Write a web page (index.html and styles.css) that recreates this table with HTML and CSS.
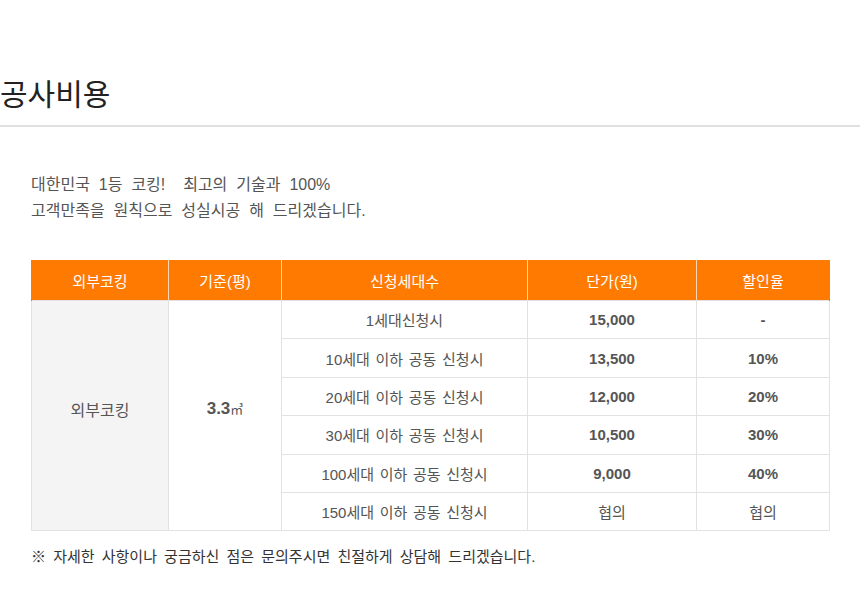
FILE: index.html
```html
<!DOCTYPE html>
<html lang="ko">
<head>
<meta charset="utf-8">
<title>공사비용</title>
<link rel="stylesheet" href="styles.css">
</head>
<body>
<div class="page">
  <h2 class="title">공사비용</h2>
  <div class="content">
    <p class="intro">대한민국 1등 코킹!&nbsp; 최고의 기술과 100%<br>고객만족을 원칙으로 성실시공 해 드리겠습니다.</p>
    <table class="price">
      <colgroup>
        <col class="c1"><col class="c2"><col class="c3"><col class="c4"><col class="c5">
      </colgroup>
      <thead>
        <tr><th>외부코킹</th><th>기준(평)</th><th>신청세대수</th><th>단가(원)</th><th>할인율</th></tr>
      </thead>
      <tbody>
        <tr>
          <td rowspan="6" class="cat">외부코킹</td>
          <td rowspan="6" class="area">3.3<span class="unit">㎥</span></td>
          <td>1세대신청시</td><td class="num">15,000</td><td class="num">-</td>
        </tr>
        <tr><td>10세대 이하 공동 신청시</td><td class="num">13,500</td><td class="num">10%</td></tr>
        <tr><td>20세대 이하 공동 신청시</td><td class="num">12,000</td><td class="num">20%</td></tr>
        <tr><td>30세대 이하 공동 신청시</td><td class="num">10,500</td><td class="num">30%</td></tr>
        <tr><td>100세대 이하 공동 신청시</td><td class="num">9,000</td><td class="num">40%</td></tr>
        <tr><td>150세대 이하 공동 신청시</td><td>협의</td><td>협의</td></tr>
      </tbody>
    </table>
    <p class="note">※ 자세한 사항이나 궁금하신 점은 문의주시면 친절하게 상담해 드리겠습니다.</p>
  </div>
</div>
</body>
</html>
```

FILE: styles.css
```css
html, body {
  margin: 0;
  padding: 0;
  background: #fff;
}
body {
  font-family: "Liberation Sans", "Noto Sans CJK KR", sans-serif;
  color: #555;
}
.page {
  width: 860px;
  padding-top: 71px;
}
.title {
  margin: 0;
  padding: 0 0 12px 0;
  font-size: 30px;
  line-height: 42px;
  font-weight: normal;
  color: #222;
  font-family: "Noto Sans CJK KR", sans-serif;
  border-bottom: 2px solid #e0e0e0;
}
.content {
  padding: 0 31px 0 31px;
}
.intro {
  margin: 45px 0 0 0;
  font-size: 16px;
  line-height: 26px;
  color: #555;
  word-spacing: 4.5px;
}
.price {
  margin-top: 36px;
  width: 798px;
  border-collapse: collapse;
  table-layout: fixed;
  font-size: 15px;
  word-spacing: 1.5px;
}
.c1 { width: 137px; }
.c2 { width: 113px; }
.c3 { width: 246px; }
.c4 { width: 169px; }
.c5 { width: 133px; }
.price th {
  background: #ff7a00;
  color: #fff;
  font-weight: normal;
  height: 40px;
  padding: 0;
  border-left: 1px solid #ffd9b3;
  border-right: 1px solid #ffd9b3;
}
.price th:first-child { border-left-color: #ff7a00; }
.price th:last-child { border-right-color: #ff7a00; }
.price td {
  height: 37.4px;
  padding: 0;
  text-align: center;
  border: 1px solid #e2e2e2;
  color: #555;
}
.price td.cat {
  background: #f4f4f4;
  font-size: 16px;
  padding-bottom: 14px;
}
.price td.area {
  font-weight: bold;
  font-size: 17px;
  color: #555;
  padding-bottom: 14px;
}
.unit {
  font-weight: normal;
  font-size: 13px;
}
.price td.num {
  font-weight: bold;
}
.note {
  margin: 15px 0 0 0;
  font-size: 15px;
  line-height: 22px;
  color: #333;
  word-spacing: 3px;
}
```
